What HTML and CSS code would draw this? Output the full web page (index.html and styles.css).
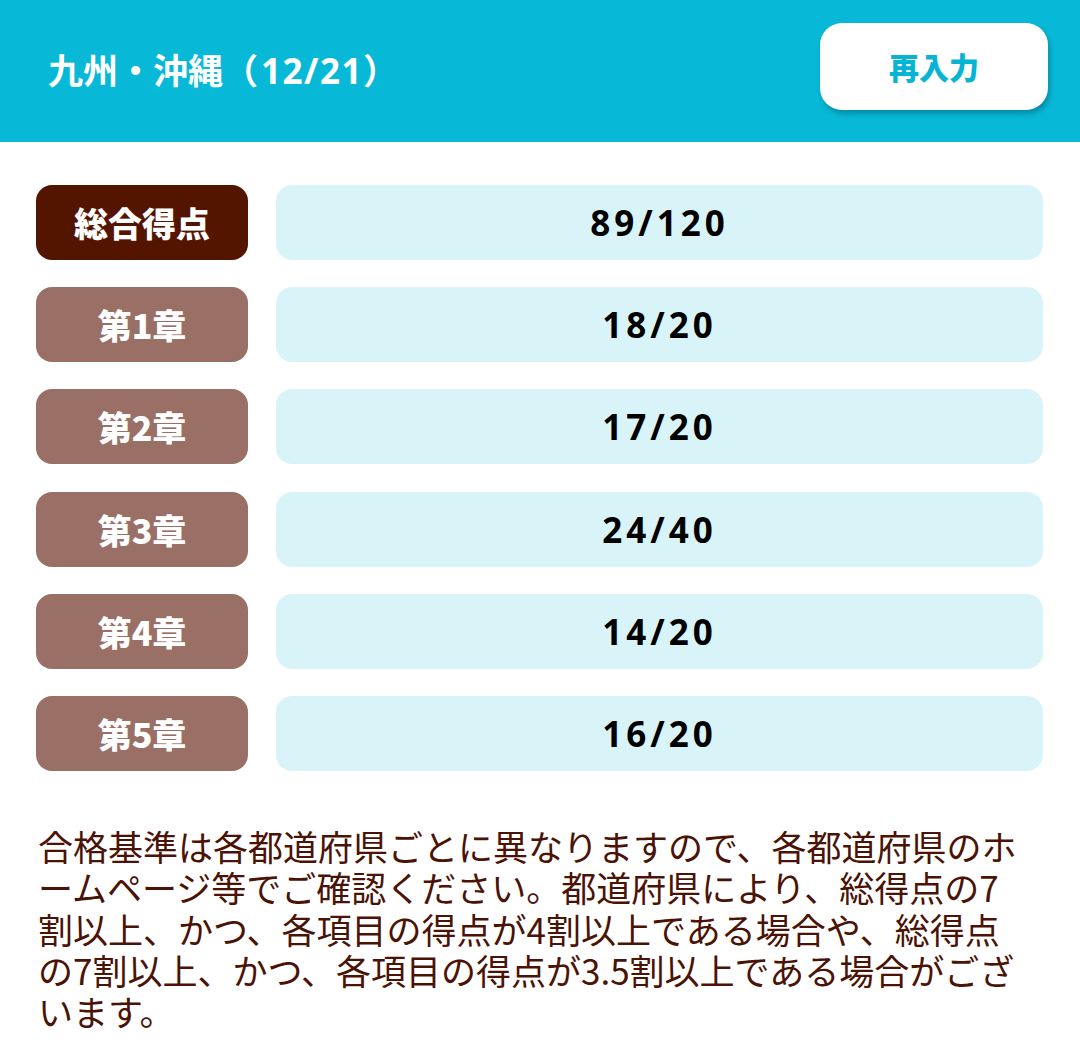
FILE: index.html
```html
<!DOCTYPE html>
<html lang="ja">
<head>
<meta charset="utf-8">
<title>結果</title>
<link rel="stylesheet" href="styles.css">
</head>
<body>
<header class="header">
  <h1 class="title">九州・沖縄（<span class="num">12/21</span>）</h1>
  <button class="retry">再入力</button>
</header>
<main class="content">
  <div class="rows">
    <div class="row"><div class="label total">総合得点</div><div class="value">89/120</div></div>
    <div class="row"><div class="label">第1章</div><div class="value">18/20</div></div>
    <div class="row"><div class="label">第2章</div><div class="value">17/20</div></div>
    <div class="row"><div class="label">第3章</div><div class="value">24/40</div></div>
    <div class="row"><div class="label">第4章</div><div class="value">14/20</div></div>
    <div class="row"><div class="label">第5章</div><div class="value">16/20</div></div>
  </div>
  <p class="note">合格基準は各都道府県ごとに異なりますので、各都道府県のホームページ等でご確認ください。都道府県により、総得点の7割以上、かつ、各項目の得点が4割以上である場合や、総得点の7割以上、かつ、各項目の得点が3.5割以上である場合がございます。</p>
</main>
</body>
</html>
```
FILE: styles.css
```css
html, body {
  margin: 0;
  padding: 0;
  background: #ffffff;
}
body {
  font-family: "Open Sans", "Noto Sans CJK JP", sans-serif;
  width: 1080px;
}
.header {
  height: 142px;
  background: #07b9d7;
  display: flex;
  align-items: center;
  justify-content: space-between;
  padding: 0 32px 0 48px;
  box-sizing: border-box;
}
.title {
  margin: 0;
  margin-top: -6px;
  color: #ffffff;
  font-size: 35px;
  font-weight: 700;
}
.title .num {
  letter-spacing: 1.5px;
  margin-left: 3px;
}
.retry {
  width: 228px;
  height: 87px;
  margin-top: -10px;
  border: none;
  border-radius: 22px;
  background: #ffffff;
  color: #07b4d3;
  font-family: "Noto Sans CJK JP", sans-serif;
  font-size: 30px;
  font-weight: 900;
  box-shadow: 2px 4px 5px rgba(0, 60, 80, 0.35);
}
.content {
  padding: 43px 37px 0 36px;
}
.rows {
  display: flex;
  flex-direction: column;
  gap: 27.2px;
}
.row {
  display: flex;
  gap: 28px;
  height: 75px;
}
.label {
  width: 212px;
  flex: none;
  border-radius: 16px;
  background: #9a7066;
  color: #ffffff;
  font-family: "Noto Sans CJK JP", sans-serif;
  font-size: 34px;
  font-weight: 900;
  display: flex;
  align-items: center;
  justify-content: center;
}
.label.total {
  background: #541500;
}
.value {
  flex: 1;
  border-radius: 16px;
  background: #d9f4f9;
  color: #000000;
  font-size: 35px;
  font-weight: 700;
  letter-spacing: 4px;
  display: flex;
  align-items: center;
  justify-content: center;
}
.note {
  width: 992px;
  margin: 54px 0 0 2px;
  color: #4a1306;
  font-family: "Noto Sans CJK JP", sans-serif;
  font-size: 35px;
  font-weight: 400;
  line-height: 41.3px;
  line-break: loose;
}
```
